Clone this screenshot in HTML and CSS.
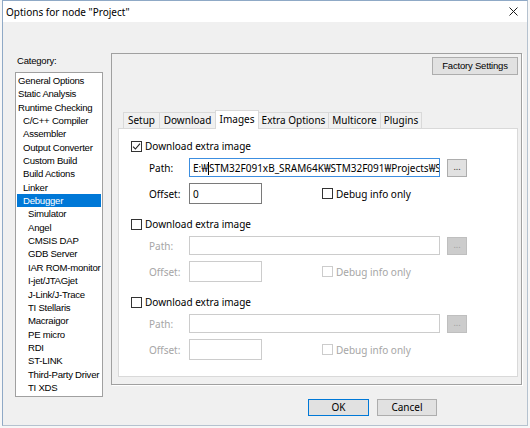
FILE: index.html
```html
<!DOCTYPE html>
<html>
<head>
<meta charset="utf-8">
<link rel="stylesheet" href="styles.css">
</head>
<body>
<div class="window">
  <div class="titlebar">
    <span class="title">Options for node "Project"</span>
    <svg class="close" width="9" height="9" viewBox="0 0 9 9"><path d="M0.5 0.5L8.5 8.5M8.5 0.5L0.5 8.5" stroke="#1a1a1a" stroke-width="1"/></svg>
  </div>
  <div class="main">
    <div class="leftcol">
      <div class="cat-label">Category:</div>
      <ul class="catlist">
        <li class="l1">General Options</li>
        <li class="l1">Static Analysis</li>
        <li class="l1">Runtime Checking</li>
        <li class="l2">C/C++ Compiler</li>
        <li class="l2">Assembler</li>
        <li class="l2">Output Converter</li>
        <li class="l2">Custom Build</li>
        <li class="l2">Build Actions</li>
        <li class="l2">Linker</li>
        <li class="l2 sel">Debugger</li>
        <li class="l3">Simulator</li>
        <li class="l3">Angel</li>
        <li class="l3">CMSIS DAP</li>
        <li class="l3">GDB Server</li>
        <li class="l3">IAR ROM-monitor</li>
        <li class="l3">I-jet/JTAGjet</li>
        <li class="l3">J-Link/J-Trace</li>
        <li class="l3">TI Stellaris</li>
        <li class="l3">Macraigor</li>
        <li class="l3">PE micro</li>
        <li class="l3">RDI</li>
        <li class="l3">ST-LINK</li>
        <li class="l3">Third-Party Driver</li>
        <li class="l3">TI XDS</li>
      </ul>
    </div>
    <div class="rightcol">
      <div class="group">
        <div class="btn factory">Factory Settings</div>
        <div class="tabs">
          <div class="tab t-setup">Setup</div>
          <div class="tab t-download">Download</div>
          <div class="tab t-images active">Images</div>
          <div class="tab t-extra">Extra Options</div>
          <div class="tab t-multi">Multicore</div>
          <div class="tab t-plugins">Plugins</div>
        </div>
        <div class="page">
          <div class="imggroup">
            <div class="cbrow">
              <span class="cb"><svg width="9" height="9" viewBox="0 0 9 9"><path d="M1 4.6L3.4 7L8 1.6" fill="none" stroke="#222" stroke-width="1.1"/></svg></span>
              <span class="cbtext">Download extra image</span>
            </div>
            <div class="row pathrow">
              <span class="lbl">Path:</span>
              <div class="edit path focused"><span class="etext clip">E:₩<span class="caret"></span>STM32F091xB_SRAM64K₩STM32F091₩Projects₩STM32F091RC-Nucleo</span></div>
              <div class="browse">...</div>
            </div>
            <div class="row offrow">
              <span class="lbl">Offset:</span>
              <div class="edit offset"><span class="etext">0</span></div>
              <span class="cb dbg"></span>
              <span class="cbtext">Debug info only</span>
            </div>
          </div>
          <div class="imggroup dis">
            <div class="cbrow">
              <span class="cb"></span>
              <span class="cbtext">Download extra image</span>
            </div>
            <div class="row pathrow">
              <span class="lbl">Path:</span>
              <div class="edit path"></div>
              <div class="browse">...</div>
            </div>
            <div class="row offrow">
              <span class="lbl">Offset:</span>
              <div class="edit offset"></div>
              <span class="cb dbg"></span>
              <span class="cbtext">Debug info only</span>
            </div>
          </div>
          <div class="imggroup dis">
            <div class="cbrow">
              <span class="cb"></span>
              <span class="cbtext">Download extra image</span>
            </div>
            <div class="row pathrow">
              <span class="lbl">Path:</span>
              <div class="edit path"></div>
              <div class="browse">...</div>
            </div>
            <div class="row offrow">
              <span class="lbl">Offset:</span>
              <div class="edit offset"></div>
              <span class="cb dbg"></span>
              <span class="cbtext">Debug info only</span>
            </div>
          </div>
        </div>
      </div>
      <div class="buttons">
        <div class="btn ok">OK</div>
        <div class="btn cancel">Cancel</div>
      </div>
    </div>
  </div>
</div>
</body>
</html>
```
FILE: styles.css
```css
* { box-sizing: border-box; }
html, body { margin: 0; padding: 0; }
body {
  width: 530px;
  height: 428px;
  overflow: hidden;
  background: #f7f7f7;
  font-family: "Noto Sans", "Open Sans", sans-serif;
  font-size: 10px;
  color: #000;
}
.window {
  margin-left: 2px;
  width: 526px;
  height: 426px;
  border: 1px solid #8fa9c6;
  border-right-color: #b5c2cf;
  border-bottom-color: #b5c2cf;
  background: #f0f0f0;
  display: flex;
  flex-direction: column;
}
.titlebar {
  flex: none;
  height: 21px;
  background: #fff;
  display: flex;
  align-items: center;
  padding-left: 3px;
}
.title { font-size: 10px; line-height: 14px; }
.close { margin-left: auto; margin-right: 9px; }
.main {
  flex: 1;
  display: flex;
  align-items: flex-start;
}
.leftcol {
  margin-left: 12px;
  padding-top: 32px;
  display: flex;
  flex-direction: column;
}
.cat-label {
  line-height: 14px;
  padding-left: 2px;
  margin-bottom: 4px;
  font-family: "Liberation Sans", Arial, sans-serif;
  font-size: 9.5px;
  letter-spacing: -0.2px;
}
.catlist {
  list-style: none;
  margin: 0;
  padding: 1px;
  width: 88px;
  height: 325px;
  border: 1px solid #a0a0a0;
  background: #fff;
}
.catlist li {
  height: 13.35px;
  line-height: 13.35px;
  white-space: nowrap;
  font-family: "Liberation Sans", Arial, sans-serif;
  font-size: 9.6px;
  letter-spacing: -0.25px;
}
.catlist .l1 { padding-left: 1px; }
.catlist .l2 { padding-left: 6px; }
.catlist .l3 { padding-left: 11px; }
.catlist .sel { background: #0078d7; color: #fff; }
.rightcol {
  margin-left: 8px;
  padding-top: 31px;
  display: flex;
  flex-direction: column;
}
.group {
  width: 411px;
  height: 332px;
  border: 1px solid #a0a0a0;
  box-shadow: 1px 1px 0 #fff;
  display: flex;
  flex-direction: column;
  padding: 3px 3px 7px 6px;
}
.btn {
  height: 18px;
  line-height: 16px;
  text-align: center;
  background: #e1e1e1;
  border: 1px solid #adadad;
  white-space: nowrap;
}
.factory {
  align-self: flex-end;
  width: 86px;
  font-family: "Liberation Sans", Arial, sans-serif;
  font-size: 9.5px;
  letter-spacing: -0.2px;
}
.tabs {
  margin-top: 35px;
  margin-left: 5px;
  height: 18px;
  display: flex;
  align-items: flex-end;
}
.tab {
  height: 16px;
  line-height: 15px;
  text-align: center;
  background: #f0f0f0;
  border: 1px solid #d9d9d9;
  border-bottom: none;
  margin-left: -1px;
  white-space: nowrap;
}
.tab.active {
  height: 19px;
  margin-bottom: -1px;
  line-height: 16px;
  background: #fff;
  position: relative;
  z-index: 1;
}
.t-setup { width: 37px; margin-left: 0; }
.t-download { width: 57px; }
.t-images { width: 44px; }
.t-extra { width: 71px; }
.t-multi { width: 53px; }
.t-plugins { width: 42px; }
.page {
  height: 249px;
  background: #fff;
  border: 1px solid #d9d9d9;
  padding: 11px 0 0 12px;
}
.imggroup { height: 78px; }
.cbrow {
  height: 12px;
  display: flex;
  align-items: center;
}
.cb {
  flex: none;
  width: 11px;
  height: 11px;
  border: 1px solid #333;
  background: #fff;
  display: flex;
  align-items: center;
  justify-content: center;
}
.cbtext { margin-left: 3px; line-height: 14px; white-space: nowrap; }
.row {
  display: flex;
  align-items: center;
  margin-top: 6px;
}
.pathrow { height: 19px; }
.offrow { height: 21px; }
.lbl { width: 40px; margin-left: 18px; flex: none; }
.edit {
  flex: none;
  border: 1px solid #7a7a7a;
  background: #fff;
  overflow: hidden;
  white-space: nowrap;
  padding-left: 3px;
  display: flex;
  align-items: center;
}
.edit.path { width: 251px; height: 19px; }
.edit.offset { width: 73px; height: 21px; }
.edit.focused { border-color: #3c8ee0; }
.etext { line-height: 14px; }
.etext.clip {
  display: block;
  flex: 1;
  min-width: 0;
  overflow: hidden;
  white-space: nowrap;
}
.caret {
  display: inline-block;
  width: 1px;
  height: 13px;
  background: #000;
  vertical-align: -3px;
}
.browse {
  flex: none;
  margin-left: 7px;
  width: 20px;
  height: 18px;
  background: #e1e1e1;
  border: 1px solid #adadad;
  text-align: center;
  line-height: 14px;
  font-size: 9px;
  color: #333;
}
.cb.dbg { margin-left: 60px; }
.dis .lbl, .dis .row .cbtext { color: #a6a6a6; }
.dis .edit { border-color: #cccccc; }
.dis .browse { background: #cccccc; border-color: #bfbfbf; color: #a0a0a0; }
.dis .cb.dbg { border-color: #cccccc; }
.buttons {
  display: flex;
  margin-top: 14px;
  margin-left: 197px;
  gap: 8px;
}
.buttons .btn { height: 17px; line-height: 15px; }
.ok { width: 61px; border-color: #0078d7; }
.cancel { width: 60px; }
```
